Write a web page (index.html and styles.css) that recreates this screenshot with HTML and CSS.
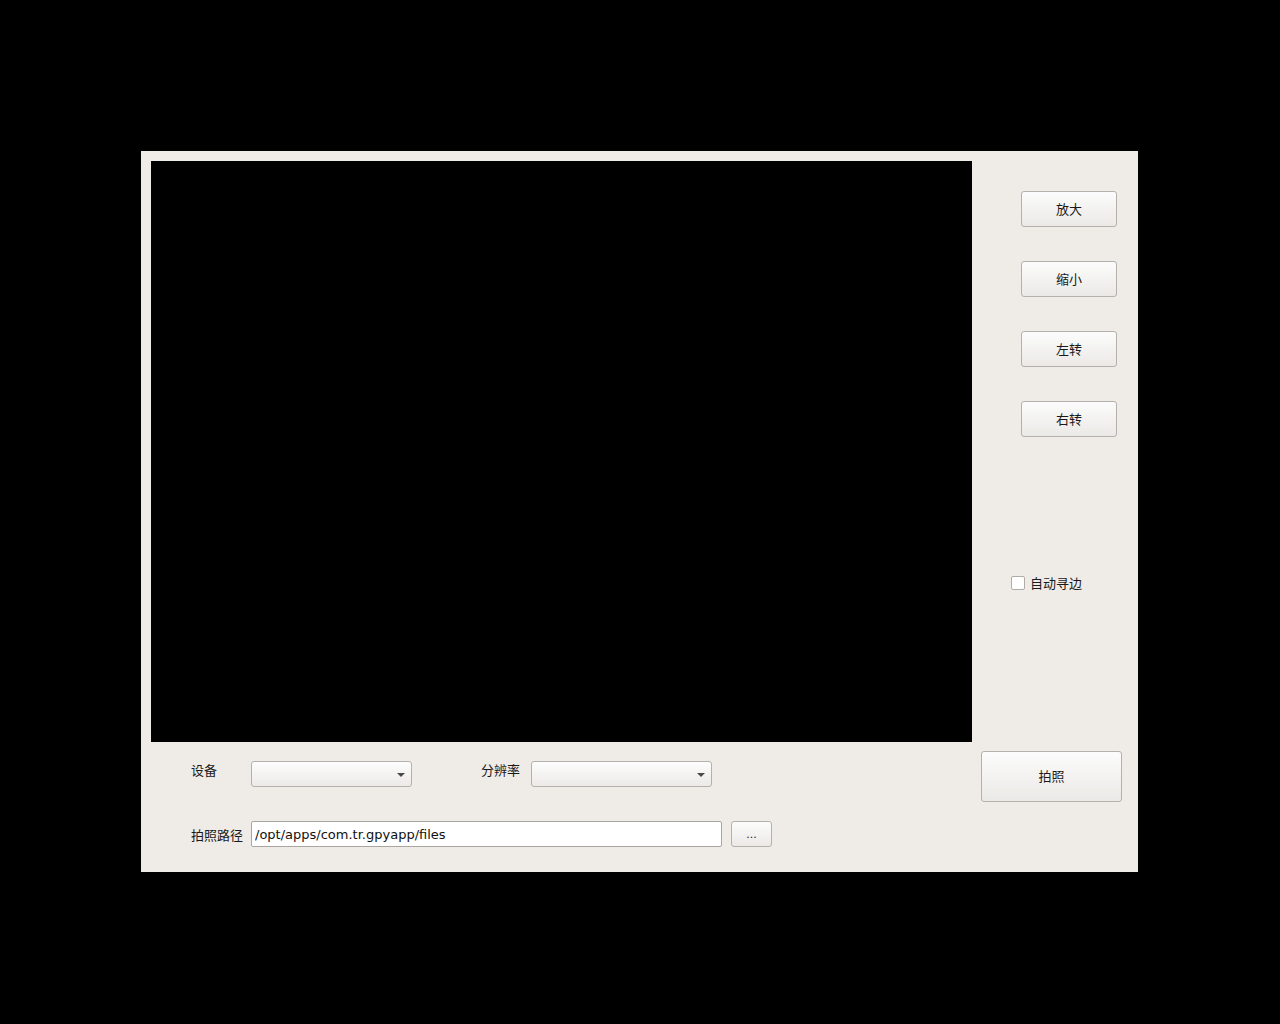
FILE: index.html
```html
<!DOCTYPE html>
<html lang="zh-CN">
<head>
  <meta charset="UTF-8">
  <title>拍照</title>
  <link rel="stylesheet" href="styles.css">
</head>
<body>

<div class="window">
  <div class="top">
    <div class="preview"></div>
    <div class="side">
      <button class="btn side-btn">放大</button>
      <button class="btn side-btn">缩小</button>
      <button class="btn side-btn">左转</button>
      <button class="btn side-btn">右转</button>
      <label class="check">
        <span class="box"></span>
        <span>自动寻边</span>
      </label>
    </div>
  </div>

  <div class="bottom">
    <div class="fields">
      <div class="row row-top">
        <span class="label label-dev">设备</span>
        <div class="combo combo-dev"><span class="arrow"></span></div>
        <span class="label label-res">分辨率</span>
        <div class="combo combo-res"><span class="arrow"></span></div>
      </div>
      <div class="row row-path">
        <span class="label label-path">拍照路径</span>
        <input class="path" type="text" value="/opt/apps/com.tr.gpyapp/files">
        <button class="btn browse">...</button>
      </div>
    </div>
    <button class="btn shoot">拍照</button>
  </div>
</div>

</body>
</html>
```

FILE: styles.css
```css
* {
  box-sizing: border-box;
  margin: 0;
  padding: 0;
}
body {
  background: #000;
  width: 1280px;
  height: 1024px;
  font-family: "DejaVu Sans", "Noto Sans CJK SC", sans-serif;
  font-size: 13px;
  color: #1a1a1a;
}
.window {
  margin: 151px 0 0 141px;
  width: 997px;
  height: 721px;
  background: #efebe7;
  padding: 10px 0 0 10px;
}
.top {
  display: flex;
  height: 581px;
}
.preview {
  width: 821px;
  height: 581px;
  background: #000;
}
.side {
  flex: 1;
  display: flex;
  flex-direction: column;
  padding-top: 30px;
}
.btn {
  font-family: "DejaVu Sans", "Noto Sans CJK SC", sans-serif;
  font-size: 13px;
  color: #1a1a1a;
  background: linear-gradient(#fcfcfc, #ebe9e6);
  border: 1px solid #b4b0ab;
  border-radius: 3px;
  cursor: pointer;
  line-height: 1;
}
.side-btn {
  width: 96px;
  height: 36px;
  margin-left: 49px;
  margin-bottom: 34px;
}
.check {
  display: flex;
  align-items: center;
  gap: 5px;
  margin: 102px 0 0 39px;
  font-size: 13px;
}
.box {
  width: 14px;
  height: 14px;
  background: #fff;
  border: 1px solid #b0aca6;
  border-radius: 2px;
}
.bottom {
  display: flex;
  justify-content: space-between;
}
.fields {
  padding-left: 40px;
}
.row {
  display: flex;
  align-items: center;
}
.row-top {
  margin-top: 19px;
  height: 26px;
  align-items: flex-start;
}
.row-top .label {
  line-height: 20px;
}
.label-dev {
  width: 60px;
}
.label-res {
  width: 50px;
  margin-left: 69px;
}
.combo {
  position: relative;
  height: 26px;
  background: linear-gradient(#fdfdfd, #eceae7);
  border: 1px solid #b4b0ab;
  border-radius: 3px;
}
.combo-dev {
  width: 161px;
}
.combo-res {
  width: 181px;
}
.arrow {
  position: absolute;
  right: 6px;
  top: 11px;
  border-left: 4px solid transparent;
  border-right: 4px solid transparent;
  border-top: 4px solid #4a4a4a;
}
.row-path {
  margin-top: 34px;
  height: 26px;
}
.label-path {
  width: 60px;
}
.path {
  width: 471px;
  height: 26px;
  border: 1px solid #a9a5a0;
  border-radius: 2px;
  background: #fff;
  padding: 0 3px;
  font-family: "DejaVu Sans", "Noto Sans CJK SC", sans-serif;
  font-size: 13px;
  color: #111;
}
.browse {
  width: 41px;
  height: 26px;
  margin-left: 9px;
  font-size: 11px;
}
.shoot {
  width: 141px;
  height: 51px;
  margin: 9px 16px 0 0;
}
```
